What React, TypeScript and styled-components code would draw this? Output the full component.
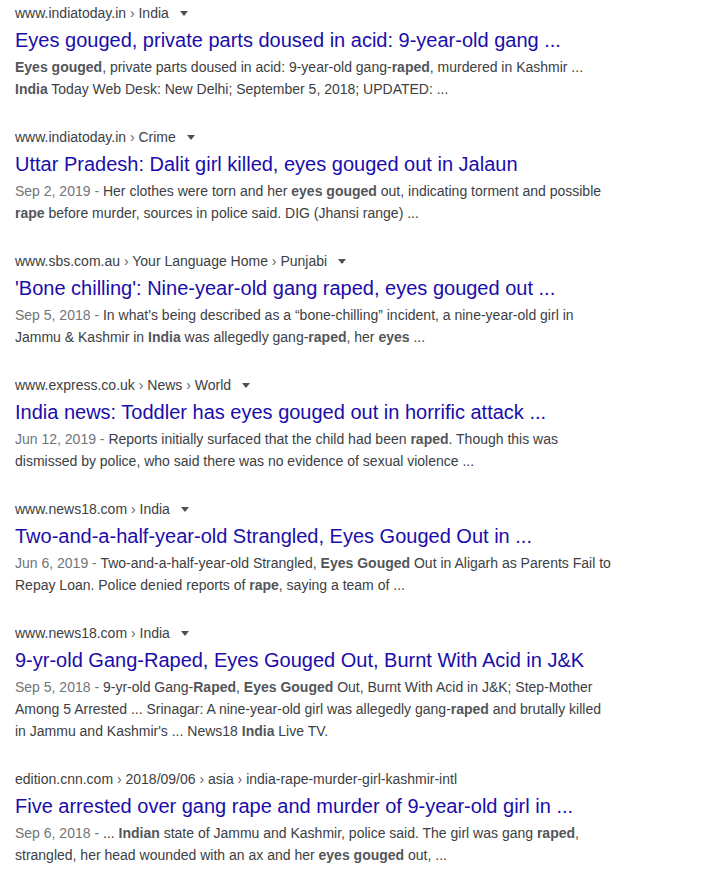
import React from 'react';
import styled, { createGlobalStyle } from 'styled-components';

const GlobalStyle = createGlobalStyle`
  html, body {
    margin: 0;
    padding: 0;
    background: #fff;
  }
  body {
    font-family: "Liberation Sans", Arial, sans-serif;
  }
`;

type Result = {
  domain: string;
  crumbs: string[];
  menu: boolean;
  title: string;
  date?: string;
  lines: string[];
};

// **text** marks the bold words of a snippet line
const results: Result[] = [
  {
    domain: 'www.indiatoday.in',
    crumbs: ['India'],
    menu: true,
    title: 'Eyes gouged, private parts doused in acid: 9-year-old gang ...',
    lines: [
      '**Eyes gouged**, private parts doused in acid: 9-year-old gang-**raped**, murdered in Kashmir ...',
      '**India** Today Web Desk: New Delhi; September 5, 2018; UPDATED: ...',
    ],
  },
  {
    domain: 'www.indiatoday.in',
    crumbs: ['Crime'],
    menu: true,
    title: 'Uttar Pradesh: Dalit girl killed, eyes gouged out in Jalaun',
    date: 'Sep 2, 2019',
    lines: [
      'Her clothes were torn and her **eyes gouged** out, indicating torment and possible',
      '**rape** before murder, sources in police said. DIG (Jhansi range) ...',
    ],
  },
  {
    domain: 'www.sbs.com.au',
    crumbs: ['Your Language Home', 'Punjabi'],
    menu: true,
    title: "'Bone chilling': Nine-year-old gang raped, eyes gouged out ...",
    date: 'Sep 5, 2018',
    lines: [
      'In what\u2019s being described as a \u201cbone-chilling\u201d incident, a nine-year-old girl in',
      'Jammu & Kashmir in **India** was allegedly gang-**raped**, her **eyes** ...',
    ],
  },
  {
    domain: 'www.express.co.uk',
    crumbs: ['News', 'World'],
    menu: true,
    title: 'India news: Toddler has eyes gouged out in horrific attack ...',
    date: 'Jun 12, 2019',
    lines: [
      'Reports initially surfaced that the child had been **raped**. Though this was',
      'dismissed by police, who said there was no evidence of sexual violence ...',
    ],
  },
  {
    domain: 'www.news18.com',
    crumbs: ['India'],
    menu: true,
    title: 'Two-and-a-half-year-old Strangled, Eyes Gouged Out in ...',
    date: 'Jun 6, 2019',
    lines: [
      'Two-and-a-half-year-old Strangled, **Eyes Gouged** Out in Aligarh as Parents Fail to',
      'Repay Loan. Police denied reports of **rape**, saying a team of ...',
    ],
  },
  {
    domain: 'www.news18.com',
    crumbs: ['India'],
    menu: true,
    title: '9-yr-old Gang-Raped, Eyes Gouged Out, Burnt With Acid in J&K',
    date: 'Sep 5, 2018',
    lines: [
      '9-yr-old Gang-**Raped**, **Eyes Gouged** Out, Burnt With Acid in J&K; Step-Mother',
      'Among 5 Arrested ... Srinagar: A nine-year-old girl was allegedly gang-**raped** and brutally killed',
      "in Jammu and Kashmir's ... News18 **India** Live TV.",
    ],
  },
  {
    domain: 'edition.cnn.com',
    crumbs: ['2018/09/06', 'asia', 'india-rape-murder-girl-kashmir-intl'],
    menu: false,
    title: 'Five arrested over gang rape and murder of 9-year-old girl in ...',
    date: 'Sep 6, 2018',
    lines: [
      '... **Indian** state of Jammu and Kashmir, police said. The girl was gang **raped**,',
      'strangled, her head wounded with an ax and her **eyes gouged** out, ...',
    ],
  },
];

const Page = styled.div`
  padding: 3px 0 0 15px;
  width: 600px;
`;

const Item = styled.div`
  margin-bottom: 27px;
`;

const UrlRow = styled.div`
  height: 20px;
  line-height: 20px;
  font-size: 14px;
  color: #3c4043;
  white-space: nowrap;
`;

const Sep = styled.span`
  color: #5f6368;
`;

const MenuArrow = styled.span`
  display: inline-block;
  vertical-align: middle;
  margin: -2px 0 0 11px;
  width: 0;
  height: 0;
  border-top: 5px solid #4d5156;
  border-left: 4px solid transparent;
  border-right: 4px solid transparent;
`;

const Title = styled.a`
  display: block;
  margin: 4px 0 3px;
  height: 26px;
  line-height: 26px;
  font-size: 20px;
  color: #1a0dab;
  text-decoration: none;
  white-space: nowrap;
  cursor: pointer;
`;

const Line = styled.div`
  height: 22px;
  line-height: 22px;
  font-size: 14px;
  color: #3c4043;
  white-space: nowrap;

  b {
    font-weight: bold;
    color: #52565a;
  }
`;

const Date = styled.span`
  color: #70757a;
`;

const renderLine = (text: string) =>
  text.split('**').map((part, i) =>
    i % 2 === 1 ? <b key={i}>{part}</b> : <React.Fragment key={i}>{part}</React.Fragment>
  );

const SearchResult = ({ r }: { r: Result }) => (
  <Item>
    <UrlRow>
      {r.domain}
      {r.crumbs.map((c) => (
        <React.Fragment key={c}>
          <Sep> › </Sep>
          {c}
        </React.Fragment>
      ))}
      {r.menu && <MenuArrow />}
    </UrlRow>
    <Title>{r.title}</Title>
    {r.lines.map((l, i) => (
      <Line key={i}>
        {i === 0 && r.date && <Date>{r.date} - </Date>}
        {renderLine(l)}
      </Line>
    ))}
  </Item>
);

export default function App() {
  return (
    <>
      <GlobalStyle />
      <Page>
        {results.map((r, i) => (
          <SearchResult key={i} r={r} />
        ))}
      </Page>
    </>
  );
}
